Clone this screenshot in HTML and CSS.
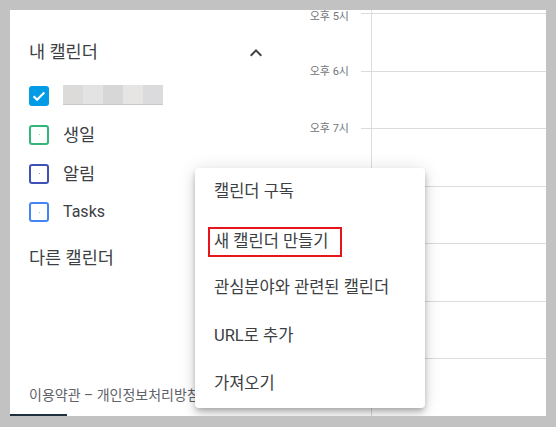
FILE: index.html
```html
<!DOCTYPE html>
<html lang="ko">
<head>
<meta charset="utf-8">
<link rel="stylesheet" href="styles.css">
</head>
<body>
<div class="app">
  <aside class="sidebar">
    <div class="section-head">
      <span class="ko">내 캘린더</span>
      <svg class="chev" width="24" height="24" viewBox="0 0 24 24"><path d="M7.41 15.41L12 10.83l4.59 4.58L18 14l-6-6-6 6z" fill="#3c4043"/></svg>
    </div>
    <ul class="cal-list">
      <li class="cal-item">
        <span class="box checked">
          <svg width="16" height="16" viewBox="0 0 16 16"><path d="M2.6 8.2l3.5 3.5 7.2-7.2" fill="none" stroke="#fff" stroke-width="2.2"/></svg>
        </span>
        <span class="blur">
          <i class="b1"></i><i class="b2"></i><i class="b3"></i><i class="b4"></i><i class="b5"></i>
        </span>
      </li>
      <li class="cal-item"><span class="box green"><b></b></span><span class="label ko">생일</span></li>
      <li class="cal-item"><span class="box navy"><b></b></span><span class="label ko">알림</span></li>
      <li class="cal-item"><span class="box blue"><b></b></span><span class="label">Tasks</span></li>
    </ul>
    <div class="section-head other"><span class="ko">다른 캘린더</span></div>
    <div class="footer">이용약관 – 개인정보처리방침</div>
    <div class="bar"></div>
  </aside>
  <section class="times">
    <div class="tlabel first">오후 5시</div>
    <div class="tlabel">오후 6시</div>
    <div class="tlabel">오후 7시</div>
    <div class="tlabel"></div>
    <div class="tlabel"></div>
    <div class="tlabel"></div>
    <div class="tlabel"></div>
  </section>
  <section class="grid">
    <div class="top"><span class="tick"></span><span class="cell"></span></div>
    <div class="row"><span class="tick"></span><span class="cell"></span></div>
    <div class="row"><span class="tick"></span><span class="cell"></span></div>
    <div class="row"><span class="tick"></span><span class="cell"></span></div>
    <div class="row"><span class="tick"></span><span class="cell"></span></div>
    <div class="row"><span class="tick"></span><span class="cell"></span></div>
    <div class="row"><span class="tick"></span><span class="cell"></span></div>
    <div class="row"><span class="tick"></span><span class="cell"></span></div>
  </section>
  <div class="menu">
    <div class="mi">캘린더 구독</div>
    <div class="mi"><span class="hl">새 캘린더 만들기</span></div>
    <div class="mi">관심분야와 관련된 캘린더</div>
    <div class="mi">URL로 추가</div>
    <div class="mi">가져오기</div>
  </div>
</div>
</body>
</html>
```

FILE: styles.css
```css
html, body {
  margin: 0;
  padding: 0;
  background: #c2c2c2;
  font-family: Roboto, "Noto Sans CJK KR", sans-serif;
}
.app {
  position: relative;
  margin: 10px 0 0 10px;
  width: 536px;
  height: 406px;
  background: #fff;
  overflow: hidden;
  display: flex;
}
.sidebar {
  width: 270px;
  flex: none;
  display: flex;
  flex-direction: column;
  padding-top: 22px;
  box-sizing: border-box;
  color: #3c4043;
}
.section-head {
  height: 40px;
  display: flex;
  align-items: center;
  justify-content: space-between;
  padding-left: 19px;
  padding-right: 12px;
  font-size: 16px;
  line-height: 22px;
}
.ko { font-size: 17.5px; }
.section-head .chev { margin-top: 1px; }
.section-head.other { margin-top: 6px; }
.cal-list {
  list-style: none;
  margin: 5px 0 0;
  padding: 0;
}
.cal-item {
  height: 38.67px;
  display: flex;
  align-items: center;
  padding-left: 19px;
}
.box {
  width: 20px;
  height: 20px;
  box-sizing: border-box;
  border: 2px solid;
  border-radius: 3px;
  display: flex;
  align-items: center;
  justify-content: center;
  margin-right: 14px;
}
.box b {
  width: 1px;
  height: 1px;
  background: currentColor;
  opacity: .6;
}
.box.checked { background: #039be5; border-color: #039be5; }
.box.green { border-color: #33b679; color: #33b679; }
.box.navy { border-color: #3f51b5; color: #3f51b5; }
.box.blue { border-color: #4285f4; color: #4285f4; }
.label {
  font-size: 16px;
  line-height: 22px;
  color: #3c4043;
}
.label.ko { font-size: 17.5px; }
.blur {
  display: flex;
  height: 19px;
  margin-top: -2px;
  border-bottom: 1px solid #c9c9cc;
}
.blur i { width: 20px; height: 19px; display: block; }
.blur .b1 { background: #dcdbd9; }
.blur .b2 { background: #e3e3e3; }
.blur .b3 { background: #d7d7d7; }
.blur .b4 { background: #e6e5e3; }
.blur .b5 { background: #dbdbdd; }
.footer {
  margin-top: auto;
  padding-left: 19px;
  font-size: 14px;
  line-height: 20px;
  color: #5f6368;
  white-space: nowrap;
  margin-bottom: 9px;
}
.bar {
  width: 57px;
  height: 2px;
  background: #1f2f3d;
}
.times {
  width: 81px;
  flex: none;
  padding-top: 3px;
}
.tlabel {
  position: relative;
  top: -6px;
  height: 57.5px;
  font-size: 11px;
  line-height: 14px;
  color: #70757a;
  text-align: right;
  padding-right: 12px;
}
.tlabel.first { top: -3px; }
.grid {
  flex: 1;
  display: flex;
  flex-direction: column;
}
.top, .row { display: flex; }
.top { height: 3px; }
.row { height: 57.5px; flex: none; }
.tick { width: 10px; flex: none; }
.cell { flex: 1; border-left: 1px solid #dadce0; }
.row .tick, .row .cell { border-top: 1px solid #dadce0; }
.menu {
  position: absolute;
  left: 185px;
  top: 158px;
  width: 230px;
  height: 240px;
  background: #fff;
  border-radius: 4px;
  box-shadow: 0 3px 5px -1px rgba(0,0,0,.2), 0 6px 10px 0 rgba(0,0,0,.14), 0 1px 18px 0 rgba(0,0,0,.12);
  color: #3c4043;
}
.mi {
  height: 48px;
  display: flex;
  align-items: center;
  padding-left: 19px;
  font-size: 16.5px;
  line-height: 22px;
  white-space: nowrap;
}
.hl {
  margin-left: -6px;
  margin-top: 3px;
  border: 2px solid #e8141b;
  padding: 2px 12px 2px 4px;
}
```
